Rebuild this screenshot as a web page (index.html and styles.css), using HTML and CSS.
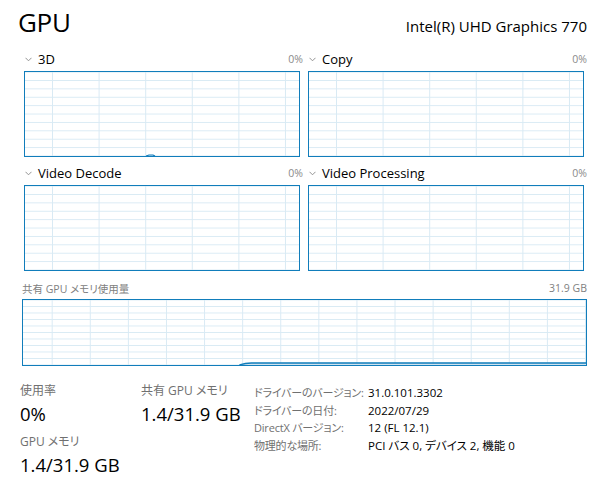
FILE: index.html
```html
<!DOCTYPE html>
<html lang="ja">
<head>
<meta charset="utf-8">
<link rel="stylesheet" href="styles.css">
</head>
<body>
<div class="page">
  <header class="header">
    <h1 class="title">GPU</h1>
    <div class="device">Intel(R) UHD Graphics 770</div>
  </header>

  <section class="graphs">
    <div class="panel">
      <div class="panel-head">
        <span class="name"><svg class="chev" width="7" height="5" viewBox="0 0 7 5"><polyline points="0.5,0.8 3.5,3.8 6.5,0.8" fill="none" stroke="#888" stroke-width="0.9"/></svg>3D</span>
        <span class="pct">0%</span>
      </div>
      <div class="graph g-engine">
        <svg class="trace" viewBox="0 0 274 84" preserveAspectRatio="none"><path d="M121 84 L124 83 L128 83 L130 84" fill="#cfe3f0" stroke="#117dbb" stroke-width="1.2"/></svg>
      </div>
    </div>
    <div class="panel">
      <div class="panel-head">
        <span class="name"><svg class="chev" width="7" height="5" viewBox="0 0 7 5"><polyline points="0.5,0.8 3.5,3.8 6.5,0.8" fill="none" stroke="#888" stroke-width="0.9"/></svg>Copy</span>
        <span class="pct">0%</span>
      </div>
      <div class="graph g-engine"></div>
    </div>
    <div class="panel">
      <div class="panel-head">
        <span class="name"><svg class="chev" width="7" height="5" viewBox="0 0 7 5"><polyline points="0.5,0.8 3.5,3.8 6.5,0.8" fill="none" stroke="#888" stroke-width="0.9"/></svg>Video Decode</span>
        <span class="pct">0%</span>
      </div>
      <div class="graph g-engine"></div>
    </div>
    <div class="panel">
      <div class="panel-head">
        <span class="name"><svg class="chev" width="7" height="5" viewBox="0 0 7 5"><polyline points="0.5,0.8 3.5,3.8 6.5,0.8" fill="none" stroke="#888" stroke-width="0.9"/></svg>Video Processing</span>
        <span class="pct">0%</span>
      </div>
      <div class="graph g-engine"></div>
    </div>
  </section>

  <section class="shared">
    <div class="shared-head">
      <span>共有 GPU メモリ使用量</span>
      <span>31.9 GB</span>
    </div>
    <div class="graph g-shared">
      <svg class="trace" viewBox="0 0 562 65" preserveAspectRatio="none"><path d="M216 65 L222 63.5 L228 63 L562 63 L562 65 Z" fill="#cfe3f0" stroke="none"/><path d="M216 65 L222 63.5 L228 63 L562 63" fill="none" stroke="#117dbb" stroke-width="1.3"/></svg>
    </div>
  </section>

  <section class="stats">
    <div class="col col1">
      <div class="lbl">使用率</div>
      <div class="val">0%</div>
      <div class="lbl lbl2">GPU メモリ</div>
      <div class="val">1.4/31.9 GB</div>
    </div>
    <div class="col col2">
      <div class="lbl">共有 GPU メモリ</div>
      <div class="val">1.4/31.9 GB</div>
    </div>
    <div class="details">
      <span class="dk">ドライバーのバージョン:</span><span class="dv">31.0.101.3302</span>
      <span class="dk">ドライバーの日付:</span><span class="dv">2022/07/29</span>
      <span class="dk">DirectX バージョン:</span><span class="dv">12 (FL 12.1)</span>
      <span class="dk">物理的な場所:</span><span class="dv">PCI バス 0, デバイス 2, 機能 0</span>
    </div>
  </section>
</div>
</body>
</html>
```
FILE: styles.css
```css
* { box-sizing: border-box; }
html, body { margin: 0; padding: 0; background: #fff; }
body {
  font-family: "Open Sans", "Noto Sans CJK JP", sans-serif;
  color: #000;
  font-feature-settings: "palt";
}
.page { width: 589px; height: 494px; overflow: hidden; }

.header {
  display: flex;
  justify-content: space-between;
  align-items: baseline;
  height: 51px;
  padding: 4px 2px 0 18px;
}
.title {
  margin: 0;
  font-size: 26px;
  font-weight: 400;
  line-height: 36px;
  letter-spacing: -0.3px;
}
.device {
  font-size: 15px;
  line-height: 20px;
}

.graphs {
  display: grid;
  grid-template-columns: 276px 276px;
  column-gap: 8px;
  row-gap: 8px;
  padding-left: 24px;
}
.panel-head {
  display: flex;
  justify-content: space-between;
  align-items: center;
  height: 20px;
  padding-bottom: 4px;
  margin-right: -3px;
}
.name {
  display: flex;
  align-items: center;
  font-size: 13px;
  line-height: 16px;
}
.chev { margin: 0 6px 0 1px; }
.pct {
  font-size: 10.5px;
  line-height: 16px;
  color: #8a8a8a;
}

.graph {
  position: relative;
  border: 1px solid #117dbb;
  background-color: #fff;
}
.g-engine {
  height: 86px;
  background-image:
    linear-gradient(to bottom, #d9eaf4 1px, transparent 1px),
    linear-gradient(to right, #d9eaf4 1px, transparent 1px);
  background-size: 100% 8.4px, 46.6px 100%;
  background-position: 0 8px, 27px 0;
}
.trace {
  position: absolute;
  left: 0; top: 0;
  width: 100%; height: 100%;
  display: block;
}

.shared {
  width: 565px;
  margin-left: 22px;
  margin-top: 8px;
}
.shared-head {
  display: flex;
  justify-content: space-between;
  align-items: center;
  height: 20px;
  padding-bottom: 2px;
  font-size: 10.5px;
  color: #808080;
}
.g-shared {
  height: 67px;
  background-image:
    linear-gradient(to bottom, #d9eaf4 1px, transparent 1px),
    linear-gradient(to right, #d9eaf4 1px, transparent 1px);
  background-size: 100% 6.5px, 38.1px 100%;
  background-position: 0 6px, 28.7px 0;
}

.stats {
  display: flex;
  margin-top: 16px;
  padding-left: 20px;
}
.col1 { width: 121px; }
.col2 { width: 113px; }
.lbl {
  font-size: 12px;
  line-height: 18px;
  color: #707070;
}
.lbl2 { margin-top: 5px; }
.val {
  font-size: 18.5px;
  line-height: 28px;
}
.details {
  display: grid;
  grid-template-columns: 114px auto;
  grid-auto-rows: 17.5px;
  align-items: center;
  padding-top: 2px;
  font-size: 11.5px;
  line-height: 17.5px;
  white-space: nowrap;
}
.dk, .dv { display: block; height: 17.5px; overflow: visible; }
.dk { color: #707070; font-size: 11px; letter-spacing: -0.2px; }
.dv { color: #000; }
```
